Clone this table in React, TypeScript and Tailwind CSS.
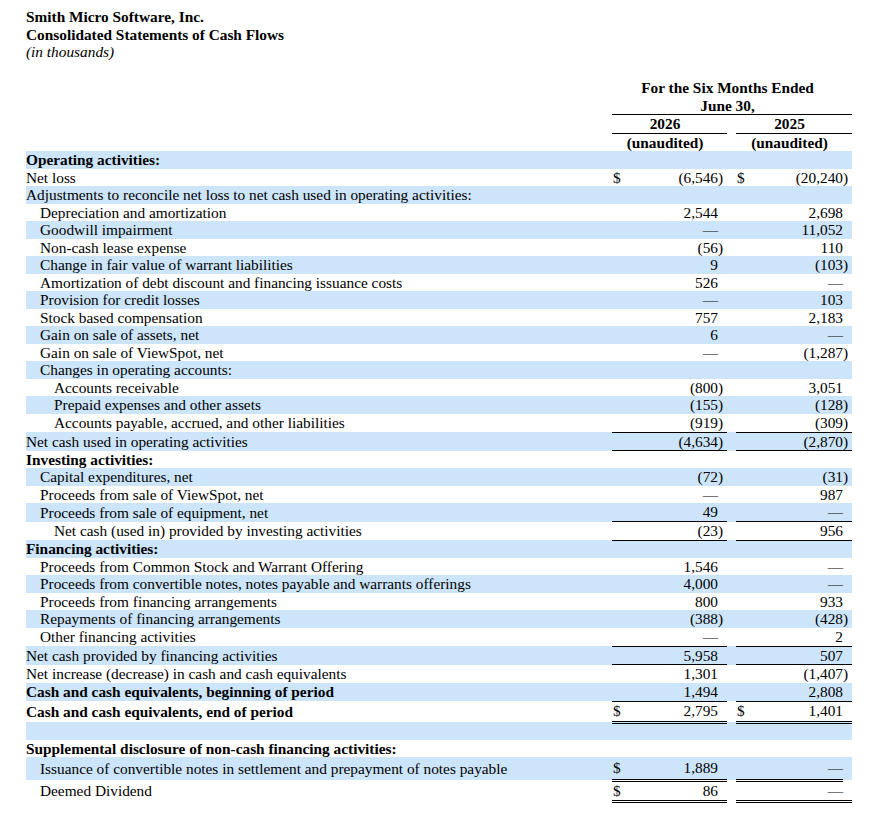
import React from "react";

type Row = {
  label: string;
  level?: 0 | 1 | 2;
  bold?: boolean;
  a?: string;
  b?: string;
  dollarA?: boolean;
  dollarB?: boolean;
  line?: "single" | "double";
  shortB?: boolean;
  tall?: boolean;
};

const rows: Row[] = [
  { label: "Operating activities:", bold: true },
  { label: "Net loss", a: "(6,546)", b: "(20,240)", dollarA: true, dollarB: true },
  { label: "Adjustments to reconcile net loss to net cash used in operating activities:" },
  { label: "Depreciation and amortization", level: 1, a: "2,544", b: "2,698" },
  { label: "Goodwill impairment", level: 1, a: "—", b: "11,052" },
  { label: "Non-cash lease expense", level: 1, a: "(56)", b: "110" },
  { label: "Change in fair value of warrant liabilities", level: 1, a: "9", b: "(103)" },
  { label: "Amortization of debt discount and financing issuance costs", level: 1, a: "526", b: "—" },
  { label: "Provision for credit losses", level: 1, a: "—", b: "103" },
  { label: "Stock based compensation", level: 1, a: "757", b: "2,183" },
  { label: "Gain on sale of assets, net", level: 1, a: "6", b: "—" },
  { label: "Gain on sale of ViewSpot, net", level: 1, a: "—", b: "(1,287)" },
  { label: "Changes in operating accounts:", level: 1 },
  { label: "Accounts receivable", level: 2, a: "(800)", b: "3,051" },
  { label: "Prepaid expenses and other assets", level: 2, a: "(155)", b: "(128)" },
  { label: "Accounts payable, accrued, and other liabilities", level: 2, a: "(919)", b: "(309)", line: "single" },
  { label: "Net cash used in operating activities", a: "(4,634)", b: "(2,870)", line: "single" },
  { label: "Investing activities:", bold: true },
  { label: "Capital expenditures, net", level: 1, a: "(72)", b: "(31)" },
  { label: "Proceeds from sale of ViewSpot, net", level: 1, a: "—", b: "987" },
  { label: "Proceeds from sale of equipment, net", level: 1, a: "49", b: "—", line: "single" },
  { label: "Net cash (used in) provided by investing activities", level: 2, a: "(23)", b: "956", line: "single" },
  { label: "Financing activities:", bold: true },
  { label: "Proceeds from Common Stock and Warrant Offering", level: 1, a: "1,546", b: "—" },
  { label: "Proceeds from convertible notes, notes payable and warrants offerings", level: 1, a: "4,000", b: "—" },
  { label: "Proceeds from financing arrangements", level: 1, a: "800", b: "933" },
  { label: "Repayments of financing arrangements", level: 1, a: "(388)", b: "(428)" },
  { label: "Other financing activities", level: 1, a: "—", b: "2", line: "single" },
  { label: "Net cash provided by financing activities", a: "5,958", b: "507", line: "single" },
  { label: "Net increase (decrease) in cash and cash equivalents", a: "1,301", b: "(1,407)" },
  { label: "Cash and cash equivalents, beginning of period", bold: true, a: "1,494", b: "2,808", line: "single" },
  { label: "Cash and cash equivalents, end of period", bold: true, a: "2,795", b: "1,401", dollarA: true, dollarB: true, line: "double" },
  { label: "" },
  { label: "Supplemental disclosure of non-cash financing activities:", bold: true },
  { label: "Issuance of convertible notes in settlement and prepayment of notes payable", level: 1, a: "1,889", b: "—", dollarA: true, line: "double", shortB: true, tall: true },
  { label: "Deemed Dividend", level: 1, a: "86", b: "—", dollarA: true, line: "double" },
];

// "(6,546)" -> ["(6,546", ")"]
const split = (v?: string): [string, string] => {
  if (!v) return ["", ""];
  if (v.endsWith(")")) return [v.slice(0, -1), ")"];
  return [v, ""];
};

const lineClass = (line?: "single" | "double") => {
  if (line === "single") return "border-b border-black";
  if (line === "double") return "border-b-[3px] border-double border-black";
  return "";
};

const heightClass = (r: Row) => {
  if (r.tall) return "h-[23px]";
  if (r.line === "double") return "h-[21px]";
  if (r.line === "single") return "h-[18.5px]";
  return "h-[17.5px]";
};

const indentClass = (level?: number) => {
  if (level === 1) return "pl-[14px]";
  if (level === 2) return "pl-[28px]";
  return "";
};

const App = () => {
  return (
    <div className="min-h-[822px] bg-white pl-[26px] pt-[8px] text-[15.33px] leading-[17.5px] text-black font-['Liberation_Serif','Times_New_Roman',serif]">
      <div className="font-bold">Smith Micro Software, Inc.</div>
      <div className="font-bold">Consolidated Statements of Cash Flows</div>
      <div className="italic">(in thousands)</div>

      <table className="mt-[18.5px] w-[826px] table-fixed border-collapse">
        <colgroup>
          <col className="w-[586px]" />
          <col className="w-[18px]" />
          <col className="w-[88px]" />
          <col className="w-[9px]" />
          <col className="w-[9px]" />
          <col className="w-[18px]" />
          <col className="w-[89px]" />
          <col className="w-[9px]" />
        </colgroup>
        <thead>
          <tr>
            <td className="h-[17.5px] p-0" />
            <td colSpan={6} className="p-0 text-center font-bold">For the Six Months Ended</td>
            <td className="p-0" />
          </tr>
          <tr>
            <td className="h-[17.5px] p-0" />
            <td colSpan={6} className="border-b border-black p-0 text-center font-bold">June 30,</td>
            <td className="border-b border-black p-0" />
          </tr>
          <tr>
            <td className="h-[17.5px] p-0" />
            <td colSpan={2} className="border-b border-black p-0 text-center font-bold">2026</td>
            <td className="border-b border-black p-0" />
            <td className="p-0" />
            <td colSpan={2} className="border-b border-black p-0 text-center font-bold">2025</td>
            <td className="border-b border-black p-0" />
          </tr>
          <tr>
            <td className="h-[18px] p-0" />
            <td colSpan={2} className="p-0 text-center font-bold">(unaudited)</td>
            <td className="p-0" />
            <td className="p-0" />
            <td colSpan={2} className="p-0 text-center font-bold">(unaudited)</td>
            <td className="p-0" />
          </tr>
        </thead>
        <tbody>
          {rows.map((r, i) => {
            const [numA, parA] = split(r.a);
            const [numB, parB] = split(r.b);
            const lc = lineClass(r.line);
            const lcB = r.shortB ? "" : lc;
            return (
              <tr key={i} className={i % 2 === 0 ? "bg-[#cde5fa]" : ""}>
                <td className={`${heightClass(r)} whitespace-nowrap p-0 ${indentClass(r.level)} ${r.bold ? "font-bold" : ""}`}>
                  {r.label}
                </td>
                <td className={`p-0 pl-px ${lc}`}>{r.dollarA ? "$" : ""}</td>
                <td className={`p-0 text-right ${lc}`}>{numA}</td>
                <td className={`p-0 ${lc}`}>{parA}</td>
                <td className="p-0" />
                <td className={`p-0 pl-px ${lc}`}>{r.dollarB ? "$" : ""}</td>
                <td className={`p-0 text-right ${lc}`}>{numB}</td>
                <td className={`p-0 ${lcB}`}>{parB}</td>
              </tr>
            );
          })}
        </tbody>
      </table>
    </div>
  );
};

export default App;
